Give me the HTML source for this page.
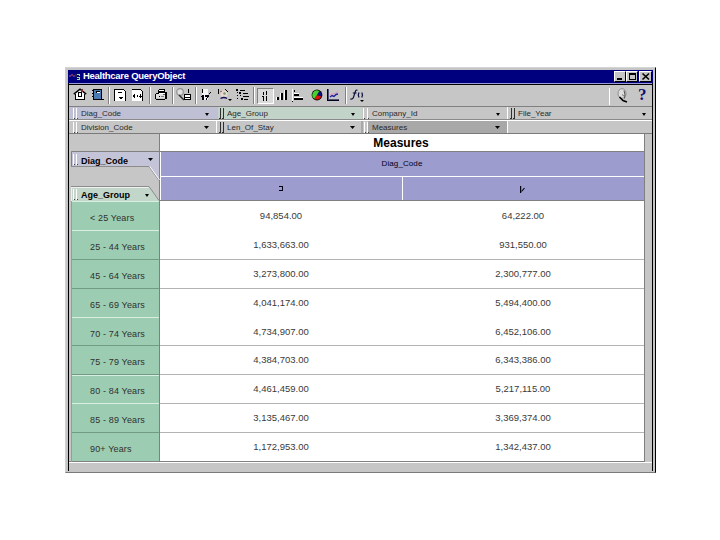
<!DOCTYPE html>
<html><head><meta charset="utf-8">
<style>
*{margin:0;padding:0;box-sizing:border-box}
html,body{width:720px;height:540px;background:#fff;overflow:hidden;position:relative;font-family:"Liberation Sans",sans-serif}
.a{position:absolute}
.t{position:absolute;white-space:nowrap;font-size:9px;line-height:10px;color:#000}
svg{position:absolute;overflow:visible}
</style></head><body>
<div class="a" style="left:65px;top:67px;width:591px;height:406px;background:#c6c6c6;border-top:1px solid #d4d4d4;border-left:1px solid #d0d0d0;border-right:1px solid #000;border-bottom:1px solid #7a7a7a"></div>
<div class="a" style="left:68px;top:70px;width:585px;height:13px;background:#00007e;"></div>
<div class="t" style="left:83px;top:70px;font-weight:bold;color:#fff;font-size:9.5px;line-height:12px;letter-spacing:-0.28px">Healthcare QueryObject</div>
<svg style="left:69px;top:73px" width="12" height="8" shape-rendering="crispEdges"><rect x="0" y="2" width="2" height="2" fill="#5a2a7a"/><rect x="2" y="1" width="2" height="2" fill="#7a2a6a"/><rect x="4" y="2" width="2" height="2" fill="#4a2a8a"/><rect x="6" y="1" width="2" height="3" fill="#202040"/><path d="M8 1h3v2h-1v1h1v3h-3v-1h2v-1h-2v-1h2v-2h-2z" fill="#a0e0a0"/></svg>
<div class="a" style="left:614px;top:71px;width:12px;height:11px;background:#c6c6c6;border-top:1px solid #fff;border-left:1px solid #fff;border-right:1px solid #000;border-bottom:1px solid #000"></div>
<div class="a" style="left:626px;top:71px;width:12px;height:11px;background:#c6c6c6;border-top:1px solid #fff;border-left:1px solid #fff;border-right:1px solid #000;border-bottom:1px solid #000"></div>
<div class="a" style="left:639px;top:71px;width:13px;height:11px;background:#c6c6c6;border-top:1px solid #fff;border-left:1px solid #fff;border-right:1px solid #000;border-bottom:1px solid #000"></div>
<div class="a" style="left:617px;top:78px;width:5px;height:2px;background:#000;"></div>
<div class="a" style="left:629px;top:73px;width:7px;height:7px;background:transparent;border:1px solid #000;border-top:2px solid #000"></div>
<svg style="left:642px;top:73px" width="8" height="7"><path d="M0.5 0.5L7 6.5M7 0.5L0.5 6.5" stroke="#000" stroke-width="1.6"/></svg>
<div class="a" style="left:68px;top:83px;width:585px;height:1px;background:#9a9ad8;"></div>
<div class="a" style="left:68px;top:84px;width:585px;height:1px;background:#000;"></div>
<div class="a" style="left:68px;top:83px;width:1px;height:388px;background:#000;"></div>
<div class="a" style="left:652px;top:83px;width:1px;height:388px;background:#000;"></div>
<div class="a" style="left:653px;top:70px;width:2px;height:402px;background:#c6c6c6;"></div>
<div class="a" style="left:69px;top:85px;width:583px;height:21px;background:#c6c6c6;"></div>
<div class="a" style="left:69px;top:106px;width:583px;height:1px;background:#808080;"></div>
<svg style="left:73px;top:88px" width="14" height="13">
<path d="M2 6H12V11H2Z" fill="#fff"/>
<path d="M0.8 6.2L7 1.2L13.2 6.2" fill="#fff" stroke="#000" stroke-width="1.5"/>
<rect x="8" y="1" width="2" height="3" fill="#7a3030"/>
<g shape-rendering="crispEdges">
<rect x="2" y="6" width="1" height="5" fill="#000"/>
<rect x="11" y="6" width="1" height="5" fill="#000"/>
<rect x="2" y="11" width="10" height="1" fill="#000"/>
<rect x="5" y="4" width="4" height="1" fill="#000"/>
<rect x="5" y="4" width="1" height="5" fill="#000"/>
<rect x="8" y="4" width="1" height="5" fill="#000"/>
<rect x="5" y="8" width="4" height="1" fill="#000"/>
</g>
</svg>
<svg style="left:92px;top:89px" width="13" height="12" shape-rendering="crispEdges">
<rect x="1" y="0" width="9" height="11" fill="#000"/>
<rect x="2" y="1" width="7" height="9" fill="#4a7ab4"/>
<rect x="4" y="2" width="4" height="2" fill="#000"/>
<rect x="4.5" y="2.5" width="3" height="1" fill="#fff"/>
<rect x="0" y="1" width="1" height="1" fill="#000"/>
<rect x="0" y="4" width="1" height="1" fill="#000"/>
<rect x="0" y="7" width="1" height="1" fill="#000"/>
<rect x="9" y="10" width="3" height="1" fill="#000"/>
</svg>
<div class="a" style="left:108px;top:87px;width:1px;height:17px;background:#808080"></div>
<div class="a" style="left:109px;top:87px;width:1px;height:17px;background:#fff"></div>
<svg style="left:114px;top:89px" width="13" height="12" shape-rendering="crispEdges">
<path d="M0 0H9L12 3V12H0Z" fill="#fff"/>
<rect x="0" y="0" width="1" height="12" fill="#000"/>
<rect x="0" y="0" width="9" height="1" fill="#000"/>
<path d="M9 0L12 3" stroke="#000" stroke-width="1" shape-rendering="auto"/>
<rect x="11" y="3" width="1" height="9" fill="#000"/>
<rect x="4" y="3" width="4" height="1" fill="#000"/>
<path d="M4 8H9L6.5 10.5Z" fill="#000"/>
</svg>
<svg style="left:132px;top:89px" width="12" height="12" shape-rendering="crispEdges">
<path d="M0 0H8L11 3V12H0Z" fill="#fff"/>
<rect x="0" y="0" width="8" height="1" fill="#000"/>
<path d="M8 0L11 3" stroke="#000" stroke-width="1" shape-rendering="auto"/>
<rect x="10" y="2" width="1" height="10" fill="#000"/>
<path d="M0 7L3 5V9Z" fill="#000"/>
<rect x="5" y="6" width="1" height="2" fill="#000"/>
<rect x="7" y="7" width="3" height="1" fill="#000"/>
<rect x="8" y="5" width="1" height="4" fill="#000"/>
</svg>
<div class="a" style="left:149px;top:87px;width:1px;height:17px;background:#808080"></div>
<div class="a" style="left:150px;top:87px;width:1px;height:17px;background:#fff"></div>
<svg style="left:155px;top:89px" width="13" height="12" shape-rendering="crispEdges">
<rect x="4" y="0" width="6" height="1" fill="#000"/>
<rect x="3" y="1" width="1" height="3" fill="#000"/>
<rect x="9" y="1" width="1" height="3" fill="#000"/>
<rect x="4" y="1" width="5" height="1" fill="#fff"/>
<rect x="4" y="2" width="5" height="2" fill="#000"/>
<rect x="1" y="4" width="3" height="1" fill="#000"/>
<rect x="4" y="4" width="6" height="1" fill="#fff"/>
<rect x="0" y="5" width="1" height="5" fill="#000"/>
<rect x="10" y="3" width="2" height="7" fill="#000"/>
<rect x="1" y="5" width="9" height="4" fill="#e0e0e0"/>
<rect x="4" y="7" width="1" height="1" fill="#000"/>
<rect x="6" y="7" width="3" height="1" fill="#808080"/>
<rect x="8" y="5" width="2" height="1" fill="#606060"/>
<rect x="1" y="10" width="9" height="1" fill="#000"/>
</svg>
<div class="a" style="left:172px;top:87px;width:1px;height:17px;background:#808080"></div>
<div class="a" style="left:173px;top:87px;width:1px;height:17px;background:#fff"></div>
<svg style="left:176px;top:88px" width="15" height="13">
<circle cx="4" cy="4" r="3.3" fill="#e0e0e0" stroke="#909090" stroke-width="1.2"/>
<path d="M3 7L8 12" stroke="#303030" stroke-width="1.5"/>
<rect x="8" y="6" width="7" height="6" fill="#000" shape-rendering="crispEdges"/>
<rect x="9" y="7" width="5" height="1.5" fill="#fff" shape-rendering="crispEdges"/>
<rect x="9" y="9.5" width="5" height="1.5" fill="#fff" shape-rendering="crispEdges"/>
<rect x="12" y="1" width="1" height="4" fill="#000" shape-rendering="crispEdges"/>
</svg>
<div class="a" style="left:195px;top:87px;width:1px;height:17px;background:#808080"></div>
<div class="a" style="left:196px;top:87px;width:1px;height:17px;background:#fff"></div>
<svg style="left:201px;top:89px" width="10" height="12" shape-rendering="crispEdges">
<rect x="1" y="0" width="6" height="11" fill="#f4f4f4"/>
<rect x="1" y="0" width="1" height="4" fill="#000"/>
<rect x="0" y="7" width="2" height="1" fill="#000010"/>
<rect x="1" y="6" width="2" height="5" fill="#000010"/>
<rect x="4" y="6" width="4" height="2" fill="#000010"/>
<rect x="6" y="8" width="1" height="1" fill="#000010"/>
<rect x="5" y="9" width="1" height="2" fill="#000010"/>
<rect x="8" y="4" width="1" height="1" fill="#000"/>
<rect x="9" y="3" width="1" height="1" fill="#000"/>
</svg>
<svg style="left:218px;top:88px" width="14" height="14">
<rect x="0" y="1" width="1" height="5" fill="#000"/>
<circle cx="6" cy="6" r="3.5" fill="#e8d8d0"/>
<circle cx="6.5" cy="5.5" r="1.3" fill="#70a070"/>
<circle cx="3" cy="3.5" r="0.8" fill="#905050"/>
<path d="M2.5 10.5Q6 8.5 9 10.5" stroke="#101060" stroke-width="1.4" fill="none"/>
<path d="M7 1L10 4" stroke="#000" stroke-width="1"/>
<path d="M10 11H14L12 13Z" fill="#000"/>
</svg>
<svg style="left:236px;top:89px" width="14" height="12" shape-rendering="crispEdges">
<rect x="0" y="0" width="2" height="2" fill="#000"/>
<rect x="4" y="1" width="5" height="1" fill="#000"/>
<rect x="1" y="3" width="1" height="1" fill="#000"/>
<rect x="3" y="3" width="2" height="2" fill="#000"/>
<rect x="7" y="4" width="5" height="1" fill="#000"/>
<rect x="1" y="6" width="1" height="1" fill="#000"/>
<rect x="4" y="6" width="1" height="1" fill="#000"/>
<rect x="7" y="7" width="6" height="1" fill="#000"/>
<rect x="1" y="9" width="1" height="1" fill="#000"/>
<rect x="5" y="9" width="2" height="2" fill="#000"/>
<rect x="8" y="10" width="4" height="1" fill="#000"/>
</svg>
<div class="a" style="left:253px;top:87px;width:1px;height:17px;background:#808080"></div>
<div class="a" style="left:254px;top:87px;width:1px;height:17px;background:#fff"></div>
<div class="a" style="left:257px;top:88px;width:17px;height:16px;background:#dadada;border-top:1px solid #808080;border-left:1px solid #808080;border-bottom:1px solid #fff;border-right:1px solid #fff"></div>
<svg style="left:262px;top:91px" width="6" height="11" shape-rendering="crispEdges">
<rect x="1" y="1" width="1" height="3" fill="#000"/>
<rect x="4" y="0" width="1" height="4" fill="#000"/>
<rect x="1" y="6" width="1" height="4" fill="#000"/>
<rect x="4" y="5" width="1" height="5" fill="#000"/>
<rect x="0" y="5" width="2" height="1" fill="#000"/>
</svg>
<svg style="left:276px;top:89px" width="12" height="12" shape-rendering="crispEdges">
<rect x="1" y="8" width="2" height="3" fill="#000"/>
<rect x="5" y="4" width="2" height="7" fill="#000"/>
<rect x="9" y="1" width="2" height="10" fill="#000"/>
<rect x="0" y="8" width="1" height="3" fill="#fff"/>
<rect x="4" y="4" width="1" height="7" fill="#fff"/>
<rect x="8" y="1" width="1" height="10" fill="#fff"/>
</svg>
<svg style="left:292px;top:89px" width="12" height="14" shape-rendering="crispEdges">
<rect x="0" y="0" width="1" height="13" fill="#fff"/>
<rect x="0" y="12" width="1" height="1" fill="#000"/>
<rect x="2" y="1" width="1" height="2" fill="#000"/>
<rect x="2" y="4" width="5" height="1" fill="#fff"/>
<rect x="2" y="5" width="5" height="2" fill="#000"/>
<rect x="2" y="8" width="9" height="1" fill="#fff"/>
<rect x="2" y="9" width="9" height="2" fill="#000"/>
</svg>
<svg style="left:311px;top:89px" width="12" height="12">
<circle cx="6" cy="6" r="5.4" fill="#000"/>
<path d="M6 6L8.30 2.02A4.6 4.6 0 0 1 10.32 7.57Z" fill="#101080"/>
<path d="M6 6L10.32 7.57A4.6 4.6 0 0 1 3.36 9.77Z" fill="#e01010"/>
<path d="M6 6L3.36 9.77A4.6 4.6 0 0 1 8.30 2.02Z" fill="#48d030"/>
</svg>
<svg style="left:327px;top:89px" width="13" height="12" shape-rendering="crispEdges">
<rect x="0" y="0" width="1" height="12" fill="#000020"/>
<rect x="1" y="0" width="1" height="11" fill="#505070"/>
<rect x="0" y="11" width="12" height="1" fill="#000020"/>
<rect x="1" y="10" width="11" height="1" fill="#505070"/>
<path d="M3 8L5 6.5L7 7.5L9 5.5L11 5" stroke="#2020a0" stroke-width="1.4" fill="none" shape-rendering="auto"/>
<path d="M3 6L6 5L8 4.5L11 2.5" stroke="#e090c0" stroke-width="1" fill="none" shape-rendering="auto"/>
</svg>
<div class="a" style="left:345px;top:87px;width:1px;height:17px;background:#808080"></div>
<div class="a" style="left:346px;top:87px;width:1px;height:17px;background:#fff"></div>
<svg style="left:349px;top:89px" width="16" height="14">
<path d="M8.5 1.2Q6.8 0.6 6.3 2.8L4.3 8.8Q3.8 10.3 1.2 10" stroke="#101040" stroke-width="1.2" fill="none"/>
<path d="M3.8 4H7.5" stroke="#101040" stroke-width="1.1"/>
<path d="M10 3.5Q8.6 6 10 8.5" stroke="#101040" stroke-width="1.3" fill="none"/>
<path d="M12.8 3.5Q14.2 6 12.8 8.5" stroke="#101040" stroke-width="1.3" fill="none"/>
<path d="M11 11H15L13 13Z" fill="#000"/>
</svg>
<div class="a" style="left:609px;top:88px;width:1px;height:17px;background:#fff"></div>
<svg style="left:617px;top:88px" width="12" height="15">
<ellipse cx="5" cy="5.5" rx="4" ry="4.8" fill="#dedede" stroke="#8a8a8a" stroke-width="1"/>
<path d="M7 2.5Q8.5 6 7.5 10.5" stroke="#505050" stroke-width="1" fill="none"/>
<path d="M5 6.5L8 9" stroke="#707070" stroke-width="1" fill="none"/>
<path d="M2.5 9L6 12.5L10 14" stroke="#000" stroke-width="1.6" fill="none"/>
</svg>
<div class="t" style="left:638px;top:87px;font-family:'Liberation Serif',serif;font-weight:bold;font-size:17px;line-height:16px;color:#101070">?</div>
<div class="a" style="left:69px;top:107px;width:583px;height:13px;background:#c6c6c6;"></div>
<div class="a" style="left:69px;top:119px;width:583px;height:1px;background:#8a8a8a;"></div>
<div class="a" style="left:69px;top:120px;width:583px;height:1px;background:#fff;"></div>
<div class="a" style="left:69px;top:121px;width:583px;height:12px;background:#c6c6c6;"></div>
<div class="a" style="left:69px;top:133px;width:583px;height:1px;background:#7a7a7a;"></div>
<div class="a" style="left:69px;top:107px;width:149px;height:12px;background:#c0c0d4;"></div>
<div class="a" style="left:218px;top:107px;width:144px;height:12px;background:#c2d4ca;"></div>
<div class="a" style="left:507px;top:107px;width:1px;height:12px;background:#fff;"></div>
<div class="a" style="left:216px;top:121px;width:1px;height:12px;background:#fff;"></div>
<div class="a" style="left:361px;top:121px;width:2px;height:12px;background:#a8a8a8;"></div>
<div class="a" style="left:368px;top:121px;width:139px;height:12px;background:#a8a8a8;"></div>
<div class="a" style="left:507px;top:121px;width:1px;height:12px;background:#fff;"></div>
<div class="a" style="left:73px;top:108px;width:1px;height:11px;background:#fff;"></div>
<div class="a" style="left:74px;top:118px;width:1px;height:1px;background:#404040;"></div>
<div class="a" style="left:76px;top:108px;width:1px;height:11px;background:#fff;"></div>
<div class="a" style="left:77px;top:118px;width:1px;height:1px;background:#404040;"></div>
<div class="a" style="left:220px;top:108px;width:1px;height:11px;background:#303030;"></div>
<div class="a" style="left:219px;top:118px;width:1px;height:1px;background:#303030;"></div>
<div class="a" style="left:223px;top:108px;width:1px;height:11px;background:#303030;"></div>
<div class="a" style="left:222px;top:118px;width:1px;height:1px;background:#303030;"></div>
<div class="a" style="left:363px;top:108px;width:1px;height:11px;background:#fff;"></div>
<div class="a" style="left:364px;top:118px;width:1px;height:1px;background:#404040;"></div>
<div class="a" style="left:367px;top:108px;width:1px;height:11px;background:#fff;"></div>
<div class="a" style="left:368px;top:118px;width:1px;height:1px;background:#404040;"></div>
<div class="a" style="left:511px;top:108px;width:1px;height:11px;background:#303030;"></div>
<div class="a" style="left:510px;top:118px;width:1px;height:1px;background:#303030;"></div>
<div class="a" style="left:514px;top:108px;width:1px;height:11px;background:#303030;"></div>
<div class="a" style="left:513px;top:118px;width:1px;height:1px;background:#303030;"></div>
<div class="a" style="left:73px;top:122px;width:1px;height:11px;background:#fff;"></div>
<div class="a" style="left:74px;top:132px;width:1px;height:1px;background:#404040;"></div>
<div class="a" style="left:76px;top:122px;width:1px;height:11px;background:#fff;"></div>
<div class="a" style="left:77px;top:132px;width:1px;height:1px;background:#404040;"></div>
<div class="a" style="left:220px;top:122px;width:1px;height:11px;background:#303030;"></div>
<div class="a" style="left:219px;top:132px;width:1px;height:1px;background:#303030;"></div>
<div class="a" style="left:223px;top:122px;width:1px;height:11px;background:#303030;"></div>
<div class="a" style="left:222px;top:132px;width:1px;height:1px;background:#303030;"></div>
<div class="a" style="left:364px;top:122px;width:1px;height:11px;background:#fff;"></div>
<div class="a" style="left:365px;top:132px;width:1px;height:1px;background:#404040;"></div>
<div class="a" style="left:367px;top:122px;width:1px;height:11px;background:#fff;"></div>
<div class="a" style="left:368px;top:132px;width:1px;height:1px;background:#404040;"></div>
<div class="t" style="left:81px;top:109px;font-size:8px;line-height:10px;color:#2a2a2a">Diag_Code</div>
<svg style="left:205px;top:113px" width="4" height="3"><path d="M0 0H4L2.0 3Z" fill="#000"/></svg>
<div class="t" style="left:81px;top:123px;font-size:8px;line-height:10px;color:#2a2a2a">Division_Code</div>
<svg style="left:204px;top:126px" width="5" height="3"><path d="M0 0H5L2.5 3Z" fill="#000"/></svg>
<div class="t" style="left:227px;top:109px;font-size:8px;line-height:10px;color:#2a2a2a">Age_Group</div>
<svg style="left:351px;top:113px" width="4" height="3"><path d="M0 0H4L2.0 3Z" fill="#000"/></svg>
<div class="t" style="left:227px;top:123px;font-size:8px;line-height:10px;color:#2a2a2a">Len_Of_Stay</div>
<svg style="left:350px;top:126px" width="5" height="3"><path d="M0 0H5L2.5 3Z" fill="#000"/></svg>
<div class="t" style="left:372px;top:109px;font-size:8px;line-height:10px;color:#2a2a2a">Company_Id</div>
<svg style="left:496px;top:113px" width="4" height="3"><path d="M0 0H4L2.0 3Z" fill="#000"/></svg>
<div class="t" style="left:372px;top:123px;font-size:8px;line-height:10px;color:#2a2a2a">Measures</div>
<svg style="left:495px;top:126px" width="5" height="3"><path d="M0 0H5L2.5 3Z" fill="#000"/></svg>
<div class="t" style="left:518px;top:109px;font-size:8px;line-height:10px;color:#2a2a2a">File_Year</div>
<svg style="left:642px;top:113px" width="4" height="3"><path d="M0 0H4L2.0 3Z" fill="#000"/></svg>
<div class="a" style="left:69px;top:134px;width:576px;height:328px;background:#c6c6c6;"></div>
<div class="a" style="left:160px;top:134px;width:484px;height:17px;background:#fff;"></div>
<div class="a" style="left:160px;top:151px;width:484px;height:1px;background:#808080;"></div>
<div class="a" style="left:160px;top:152px;width:484px;height:48px;background:#9c9cce;"></div>
<div class="a" style="left:160px;top:176px;width:484px;height:1px;background:#fff;"></div>
<div class="a" style="left:402px;top:177px;width:1px;height:23px;background:#fff;"></div>
<div class="a" style="left:160px;top:152px;width:1px;height:48px;background:#fff;"></div>
<div class="a" style="left:160px;top:200px;width:484px;height:1px;background:#808080;"></div>
<div class="a" style="left:160px;top:201px;width:484px;height:261px;background:#fff;"></div>
<div class="a" style="left:644px;top:134px;width:1px;height:328px;background:#808080;"></div>
<div class="a" style="left:69px;top:461px;width:576px;height:1px;background:#808080;"></div>
<div class="a" style="left:69px;top:462px;width:583px;height:1px;background:#fff;"></div>
<div class="a" style="left:159px;top:134px;width:1px;height:328px;background:#808080;"></div>
<div class="t" style="left:301px;width:200px;text-align:center;top:136px;font-size:12px;line-height:14px;font-weight:bold">Measures</div>
<div class="t" style="left:302px;width:200px;text-align:center;top:159px;color:#000018;font-size:8px;line-height:10px;letter-spacing:0.1px">Diag_Code</div>
<svg style="left:279px;top:186px" width="6" height="6" shape-rendering="crispEdges"><rect x="0" y="0" width="4" height="1" fill="#000010"/><rect x="3" y="1" width="1" height="3" fill="#000010"/><rect x="0" y="4" width="4" height="1" fill="#000010"/></svg>
<svg style="left:520px;top:186px" width="6" height="8"><rect x="0" y="0" width="1.2" height="7" fill="#000010"/><path d="M1.5 5.5L4.5 2" stroke="#000010" stroke-width="1.1"/></svg>
<div class="a" style="left:72px;top:201px;width:87px;height:260px;background:#9ccdb2;"></div>
<div class="a" style="left:71px;top:201px;width:1px;height:261px;background:#9a9a9a;"></div>
<div class="a" style="left:72px;top:201px;width:87px;height:1px;background:#d8eee0;"></div>
<svg style="left:71px;top:151px" width="89" height="50"><path d="M0 0H88V29.5L78 15.5H0Z" fill="#c4c4d8" stroke="none"/><path d="M0.5 15V0.5H88" stroke="#808080" fill="none"/><path d="M0 15.5H78L88 29.5" stroke="#8c8c8c" fill="none"/><path d="M78.8 15.5L88.5 29" stroke="#fff" fill="none"/><path d="M0 50V35.5H78L88 49.5V50Z" fill="#c2d6ca"/><path d="M0 35.5H78L88 49.5" stroke="#8c8c8c" fill="none"/><path d="M0 36.5H77.5" stroke="#f0f0f0" fill="none"/><path d="M0.5 36V50" stroke="#f0f0f0" fill="none"/></svg>
<div class="a" style="left:73px;top:154px;width:1px;height:11px;background:#fff;"></div>
<div class="a" style="left:74px;top:164px;width:1px;height:1px;background:#404040;"></div>
<div class="a" style="left:76px;top:154px;width:1px;height:11px;background:#fff;"></div>
<div class="a" style="left:77px;top:164px;width:1px;height:1px;background:#404040;"></div>
<div class="a" style="left:73px;top:189px;width:1px;height:11px;background:#fff;"></div>
<div class="a" style="left:74px;top:199px;width:1px;height:1px;background:#404040;"></div>
<div class="a" style="left:76px;top:189px;width:1px;height:11px;background:#fff;"></div>
<div class="a" style="left:77px;top:199px;width:1px;height:1px;background:#404040;"></div>
<div class="t" style="left:81px;top:156px;font-weight:bold">Diag_Code</div>
<svg style="left:148px;top:158px" width="5" height="3"><path d="M0 0H5L2.5 3Z" fill="#000"/></svg>
<div class="t" style="left:81px;top:190px;font-weight:bold">Age_Group</div>
<svg style="left:145px;top:194px" width="4" height="3"><path d="M0 0H4L2.0 3Z" fill="#000"/></svg>
<div class="t" style="left:90px;top:213px;font-size:9px;line-height:10px;letter-spacing:0.15px;color:#303030">< 25 Years</div>
<div class="t" style="left:181px;width:200px;text-align:center;top:211px;font-size:9.5px;line-height:10px;color:#3a3a3a">94,854.00</div>
<div class="t" style="left:423px;width:200px;text-align:center;top:211px;font-size:9.5px;line-height:10px;color:#3a3a3a">64,222.00</div>
<div class="a" style="left:72px;top:230px;width:87px;height:1px;background:#d8eee0;"></div>
<div class="t" style="left:90px;top:242px;font-size:9px;line-height:10px;letter-spacing:0.15px;color:#303030">25 - 44 Years</div>
<div class="t" style="left:181px;width:200px;text-align:center;top:240px;font-size:9.5px;line-height:10px;color:#3a3a3a">1,633,663.00</div>
<div class="t" style="left:423px;width:200px;text-align:center;top:240px;font-size:9.5px;line-height:10px;color:#3a3a3a">931,550.00</div>
<div class="a" style="left:160px;top:259px;width:484px;height:1px;background:#b4b4b4;"></div>
<div class="a" style="left:72px;top:259px;width:87px;height:1px;background:#6f9c82;"></div>
<div class="t" style="left:90px;top:271px;font-size:9px;line-height:10px;letter-spacing:0.15px;color:#303030">45 - 64 Years</div>
<div class="t" style="left:181px;width:200px;text-align:center;top:269px;font-size:9.5px;line-height:10px;color:#3a3a3a">3,273,800.00</div>
<div class="t" style="left:423px;width:200px;text-align:center;top:269px;font-size:9.5px;line-height:10px;color:#3a3a3a">2,300,777.00</div>
<div class="a" style="left:160px;top:288px;width:484px;height:1px;background:#b4b4b4;"></div>
<div class="a" style="left:72px;top:288px;width:87px;height:1px;background:#6f9c82;"></div>
<div class="t" style="left:90px;top:300px;font-size:9px;line-height:10px;letter-spacing:0.15px;color:#303030">65 - 69 Years</div>
<div class="t" style="left:181px;width:200px;text-align:center;top:298px;font-size:9.5px;line-height:10px;color:#3a3a3a">4,041,174.00</div>
<div class="t" style="left:423px;width:200px;text-align:center;top:298px;font-size:9.5px;line-height:10px;color:#3a3a3a">5,494,400.00</div>
<div class="a" style="left:72px;top:317px;width:87px;height:1px;background:#d8eee0;"></div>
<div class="t" style="left:90px;top:329px;font-size:9px;line-height:10px;letter-spacing:0.15px;color:#303030">70 - 74 Years</div>
<div class="t" style="left:181px;width:200px;text-align:center;top:327px;font-size:9.5px;line-height:10px;color:#3a3a3a">4,734,907.00</div>
<div class="t" style="left:423px;width:200px;text-align:center;top:327px;font-size:9.5px;line-height:10px;color:#3a3a3a">6,452,106.00</div>
<div class="a" style="left:160px;top:345px;width:484px;height:1px;background:#b4b4b4;"></div>
<div class="a" style="left:72px;top:345px;width:87px;height:1px;background:#6f9c82;"></div>
<div class="t" style="left:90px;top:357px;font-size:9px;line-height:10px;letter-spacing:0.15px;color:#303030">75 - 79 Years</div>
<div class="t" style="left:181px;width:200px;text-align:center;top:355px;font-size:9.5px;line-height:10px;color:#3a3a3a">4,384,703.00</div>
<div class="t" style="left:423px;width:200px;text-align:center;top:355px;font-size:9.5px;line-height:10px;color:#3a3a3a">6,343,386.00</div>
<div class="a" style="left:160px;top:374px;width:484px;height:1px;background:#b4b4b4;"></div>
<div class="a" style="left:72px;top:374px;width:87px;height:1px;background:#6f9c82;"></div>
<div class="a" style="left:72px;top:375px;width:87px;height:1px;background:#d8eee0;"></div>
<div class="t" style="left:90px;top:386px;font-size:9px;line-height:10px;letter-spacing:0.15px;color:#303030">80 - 84 Years</div>
<div class="t" style="left:181px;width:200px;text-align:center;top:384px;font-size:9.5px;line-height:10px;color:#3a3a3a">4,461,459.00</div>
<div class="t" style="left:423px;width:200px;text-align:center;top:384px;font-size:9.5px;line-height:10px;color:#3a3a3a">5,217,115.00</div>
<div class="a" style="left:160px;top:403px;width:484px;height:1px;background:#b4b4b4;"></div>
<div class="a" style="left:72px;top:403px;width:87px;height:1px;background:#d8eee0;"></div>
<div class="t" style="left:90px;top:415px;font-size:9px;line-height:10px;letter-spacing:0.15px;color:#303030">85 - 89 Years</div>
<div class="t" style="left:181px;width:200px;text-align:center;top:413px;font-size:9.5px;line-height:10px;color:#3a3a3a">3,135,467.00</div>
<div class="t" style="left:423px;width:200px;text-align:center;top:413px;font-size:9.5px;line-height:10px;color:#3a3a3a">3,369,374.00</div>
<div class="a" style="left:160px;top:432px;width:484px;height:1px;background:#b4b4b4;"></div>
<div class="a" style="left:72px;top:432px;width:87px;height:1px;background:#6f9c82;"></div>
<div class="t" style="left:90px;top:444px;font-size:9px;line-height:10px;letter-spacing:0.15px;color:#303030">90+ Years</div>
<div class="t" style="left:181px;width:200px;text-align:center;top:442px;font-size:9.5px;line-height:10px;color:#3a3a3a">1,172,953.00</div>
<div class="t" style="left:423px;width:200px;text-align:center;top:442px;font-size:9.5px;line-height:10px;color:#3a3a3a">1,342,437.00</div>
</body></html>
